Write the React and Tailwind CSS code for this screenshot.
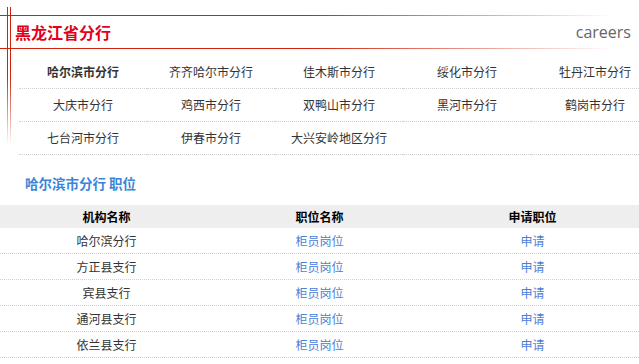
import React from 'react';

const branches = [
  '哈尔滨市分行', '齐齐哈尔市分行', '佳木斯市分行', '绥化市分行', '牡丹江市分行',
  '大庆市分行', '鸡西市分行', '双鸭山市分行', '黑河市分行', '鹤岗市分行',
  '七台河市分行', '伊春市分行', '大兴安岭地区分行', '', '',
];

const jobs = ['哈尔滨分行', '方正县支行', '宾县支行', '通河县支行', '依兰县支行'];

export default function App() {
  return (
    <div className="relative w-[639px] h-[364px] overflow-hidden bg-white font-['Microsoft_YaHei','Noto_Sans_CJK_SC',sans-serif] text-[12px] text-[#333]">
      {/* decorative frame lines */}
      <div className="absolute left-0 top-[15px] w-[615px] h-px bg-gradient-to-r from-[#1c6399] via-[#1c6399] to-transparent" />
      <div className="absolute left-0 top-[48px] w-[615px] h-px bg-gradient-to-r from-[#d0210b] via-[#d0210b] to-transparent" />
      <div className="absolute left-[7px] top-[7px] w-px h-[138px] bg-gradient-to-b from-[#1c6399] via-[#1c6399] to-transparent" />
      <div className="absolute left-[10px] top-[7px] w-px h-[138px] bg-gradient-to-b from-[#d0210b] via-[#d0210b] to-transparent" />

      {/* header */}
      <div className="pt-[16px] h-[56px]">
        <div className="h-[32px] flex items-center justify-between pl-[15px] pr-[8px]">
          <h1 className="text-[16px] font-bold text-[#e2001a] leading-none">黑龙江省分行</h1>
          <span className="font-['Open_Sans',sans-serif] text-[16px] text-[#666] leading-none">careers</span>
        </div>
      </div>

      {/* branch list */}
      <div className="ml-[19px] w-[640px] grid grid-cols-5">
        {branches.map((b, i) => (
          <div
            key={i}
            className={`h-[33px] flex items-center justify-center border-b border-dotted border-[#d0d0d0] ${i === 0 ? 'font-bold' : ''}`}
          >
            {b}
          </div>
        ))}
      </div>

      {/* section title */}
      <div className="h-[50px] pt-[6px] pl-[25px] flex items-center">
        <h2 className="text-[13.5px] font-bold text-[#3a85d9]">哈尔滨市分行 职位</h2>
      </div>

      {/* job table */}
      <div className="grid grid-cols-3 h-[23px] bg-[#eeeeee] font-bold text-black">
        <div className="flex items-center justify-center">机构名称</div>
        <div className="flex items-center justify-center">职位名称</div>
        <div className="flex items-center justify-center">申请职位</div>
      </div>
      {jobs.map((j) => (
        <div key={j} className="grid grid-cols-3 h-[26px] border-b border-dotted border-[#d0d0d0]">
          <div className="flex items-center justify-center">{j}</div>
          <div className="flex items-center justify-center text-[#4a80d8]">柜员岗位</div>
          <div className="flex items-center justify-center text-[#4a80d8]">申请</div>
        </div>
      ))}
    </div>
  );
}
